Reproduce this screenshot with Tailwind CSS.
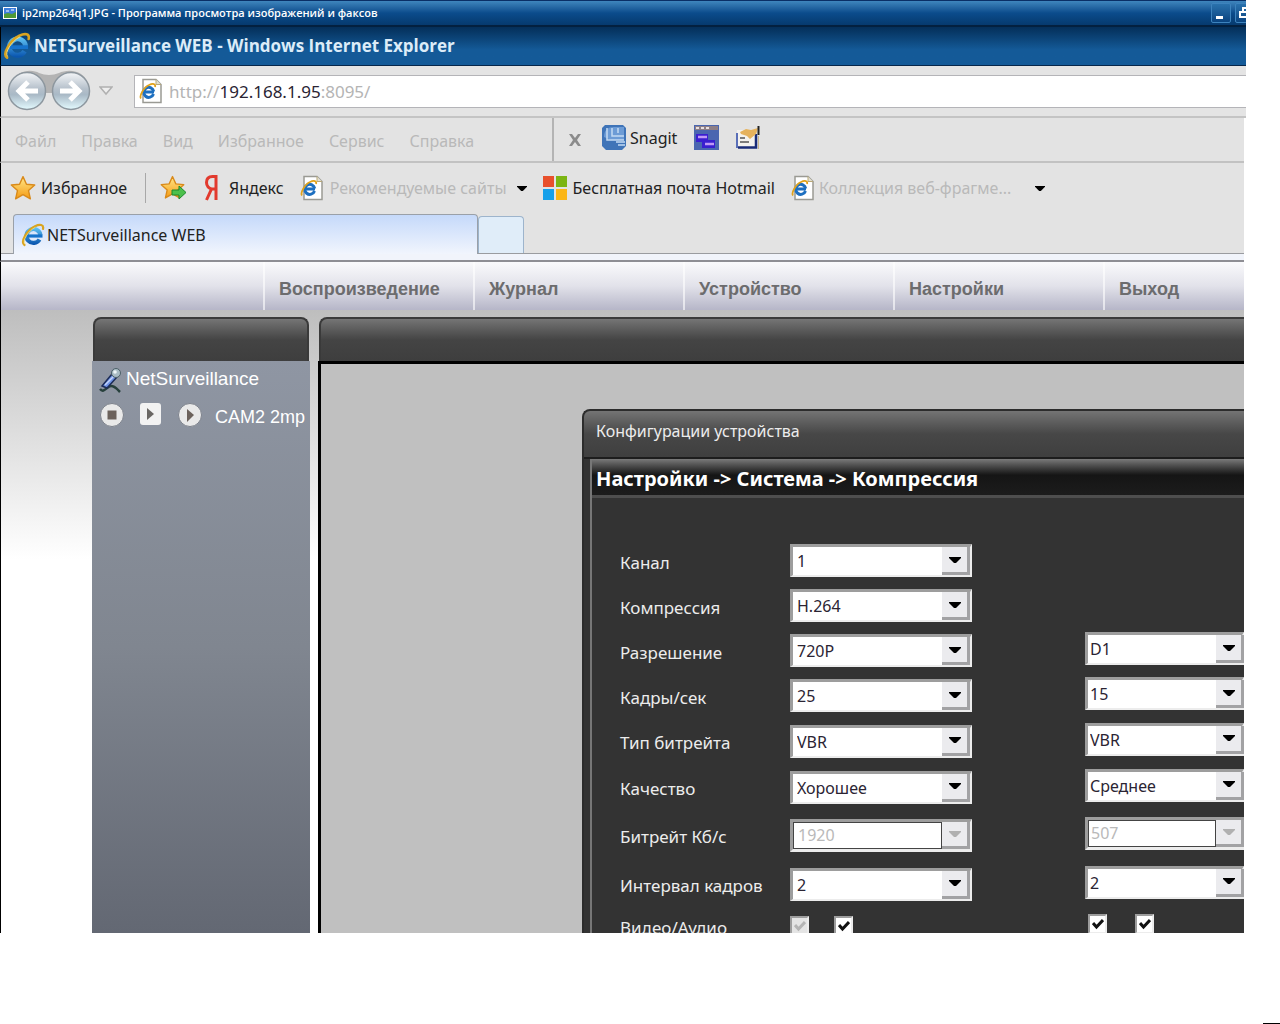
<!DOCTYPE html>
<html lang="ru">
<head>
    <meta charset="UTF-8">
    <meta name="viewport" content="width=device-width, initial-scale=1.0">
    <title>ip2mp264q1.JPG - Программа просмотра изображений и факсов</title>
    <script src="https://cdn.jsdelivr.net/npm/@tailwindcss/browser@4"></script>
</head>
<body class="relative flex h-screen flex-col overflow-hidden bg-white pb-[91px] font-['Noto_Sans',sans-serif] text-base text-[#222]">

    <!-- Shared icons -->
    <svg class="absolute h-0 w-0">
        <defs>
            <linearGradient id="ie-blue" gradientUnits="userSpaceOnUse" x1="0" y1="4" x2="0" y2="21"><stop offset="0" stop-color="#63c8f7"/><stop offset="1" stop-color="#0b57b0"/></linearGradient>
            <linearGradient id="orb" x1="0" y1="0" x2="0" y2="1"><stop offset="0" stop-color="#f4f6f8"/><stop offset=".45" stop-color="#b4bfca"/><stop offset=".6" stop-color="#a9b9c6"/><stop offset="1" stop-color="#e4fbff"/></linearGradient>
            <linearGradient id="gold" x1="0" y1="0" x2="0" y2="1"><stop offset="0" stop-color="#ffe98a"/><stop offset="1" stop-color="#f59a12"/></linearGradient>
        </defs>
        <symbol id="ie" viewBox="0 0 24 24">
            <path d="M18.500 16.500a7 7 0 1 1 .9-4.500" fill="none" stroke="url(#ie-blue)" stroke-width="4.200"/>
            <path d="M6 13h15.500" stroke="#1673cc" stroke-width="3.200"/>
            <path d="M3.500 22C-1 19 6 7 14 3.200C19 .8 23 1.500 22 6" fill="none" stroke="#d9a420" stroke-width="2.200" stroke-linecap="round"/>
            <path d="M4 21C1 18 7 8 14.500 4.200" fill="none" stroke="#f7e07a" stroke-width=".8"/>
        </symbol>
        <symbol id="ie-page" viewBox="0 0 24 26">
            <path d="M4 1.500h13l5 5v18H4z" fill="#fff" stroke="#9a9a94" stroke-width="1.500"/>
            <path d="M17 1.500v5h5" fill="#e4e0d0" stroke="#b8a878"/>
            <path d="M14.500 16a5 5 0 1 1 .2-2.500M5.500 14h9.500" fill="none" stroke="#1d6fc0" stroke-width="3"/>
            <path d="M2 20.500C0 18 5 9 10 7c4-2 7-1 6 2" fill="none" stroke="#e0a21c" stroke-width="1.800"/>
        </symbol>
        <symbol id="star" viewBox="0 0 24 24">
            <path d="M12 1.500l3.200 7 7.600.8-5.700 5.100 1.700 7.600L12 18.100 5.200 22l1.700-7.600L1.200 9.300l7.600-.8z" fill="url(#gold)" stroke="#d98a1a" stroke-width="1.300" stroke-linejoin="round"/>
        </symbol>
        <symbol id="caret" viewBox="0 0 12 6"><path d="M0 0h12v1L7 6H5L0 1z" fill="currentColor"/></symbol>
    </svg>

    <!-- Viewer title bar -->
    <header class="mr-[34px] flex h-[27px] shrink-0 items-center overflow-hidden border-t border-b-2 border-t-[#0a2f66] border-b-[#03203f] bg-linear-to-b from-[#3f86bd] via-[#0b4c8c] to-[#063a6e] pl-[3px] text-white">
        <svg class="h-3.5 w-3.5" viewBox="0 0 14 14"><path d="M0 1h14v12H0z" fill="#fff"/><path d="M1 2h12v6H1z" fill="#3e7fdc"/><path d="M1 8l4-1 4 1 4-2v6H1z" fill="#4f9a35"/><path d="M3 5h3M8 4h3" stroke="#fff"/></svg>
        <h1 class="ml-[5px] flex-1 font-['Open_Sans',sans-serif] text-[11px] font-semibold whitespace-nowrap">ip2mp264q1.JPG - Программа просмотра изображений и факсов</h1>
        <div class="flex gap-1">
            <button aria-label="Свернуть" class="flex h-5 w-5 items-end rounded-xs border border-[#3d83bd] bg-linear-to-b from-[#2a72ad] to-[#0a4480] pb-[3px] pl-1"><span class="h-[3px] w-[7px] bg-white"></span></button>
            <button aria-label="Восстановить" class="-mr-[9px] h-5 w-5 rounded-xs border border-[#3d83bd] bg-linear-to-b from-[#2a72ad] to-[#0a4480] pl-[3px]"><svg class="h-3 w-3" viewBox="0 0 12 12" fill="none" stroke="#fff" stroke-width="2"><path d="M1 5h7v5H1zM4 4V1h7v6H8"/></svg></button>
        </div>
    </header>

    <!-- Browser title bar -->
    <div class="mr-[34px] flex h-[39px] shrink-0 items-center border-b border-l border-b-[#06264a] border-l-black bg-linear-to-b from-[#052f59] to-[#145a98] to-60% pl-0.5">
        <svg class="h-7 w-7"><use href="#ie"/></svg>
        <h2 class="ml-[3px] font-['Open_Sans',sans-serif] text-[17px] font-bold whitespace-nowrap text-[#dcecf8]">NETSurveillance WEB - Windows Internet Explorer</h2>
    </div>

    <!-- Address row -->
    <div class="mr-[34px] flex h-[52px] shrink-0 items-center border-b-2 border-l border-b-[#c4c4c4] border-l-black bg-[#e4e4e4] pl-1.5">
        <div class="relative flex">
            <svg class="h-11 w-[84px]" viewBox="0 0 84 44">
                <path d="M4 14C10 0 26 0 32 4q10 4 20 0C60 0 76 0 81 14v10H4z" fill="#b3b3b3"/>
                <g stroke="#8d979f" stroke-width="1.500" fill="url(#orb)"><circle cx="20" cy="22" r="18.500"/><circle cx="64" cy="22" r="18.500"/></g>
                <g fill="none" stroke="#fff" stroke-width="5"><path d="M31 22H13M21 13l-9 9 9 9M53 22h18M63 13l9 9-9 9"/></g>
            </svg>
            <button aria-label="Назад" class="absolute top-0.5 left-0 h-10 w-10 rounded-full"></button>
            <button aria-label="Вперёд" class="absolute top-0.5 right-0 h-10 w-10 rounded-full"></button>
        </div>
        <button aria-label="Последние страницы" class="ml-2"><svg class="h-2.5 w-3.5" viewBox="0 0 14 10"><path d="M1 1h12L7 8z" fill="#eee" stroke="#b0b0b0" stroke-width="1.500"/></svg></button>
        <div class="ml-[21px] flex h-[33px] flex-1 items-center border border-r-0 border-[#b4b4b8] bg-white pl-1">
            <svg class="h-[26px] w-6"><use href="#ie-page"/></svg>
            <p class="ml-1.5 pt-0.5 text-[17px] text-[#b4b4b4]"><a href="#">http://<span class="text-[#2a2433]">192.168.1.95</span>:8095/</a></p>
        </div>
    </div>

    <!-- Menu row -->
    <div class="mr-9 flex h-[45px] shrink-0 items-stretch border-b-2 border-l border-b-[#c2c2c2] border-l-black bg-[#e3e3e3]">
        <nav class="flex w-[553px] items-center gap-[25px] border-r-2 border-r-[#b4b4b4] pt-0.5 pl-3.5 text-[#b9b9b9]">
            <a href="#">Файл</a>
            <a href="#">Правка</a>
            <a href="#">Вид</a>
            <a href="#">Избранное</a>
            <a href="#">Сервис</a>
            <a href="#">Справка</a>
        </nav>
        <div class="flex items-center pb-1 pl-3.5">
            <button aria-label="Закрыть панель" class="pt-1"><svg class="h-3.5 w-3.5" viewBox="0 0 14 14"><path d="M1 1h3l3 4 3-4h3L9 7l4 6h-3L7 9l-3 4H1l4-6z" fill="#8b8b8b"/></svg></button>
            <button class="ml-5 flex items-center gap-1">
                <svg class="h-[25px] w-6" viewBox="0 0 24 25"><path d="M3 0h18l3 3v18l-4 4H4l-4-4V3z" fill="#3f74b8"/><path d="M2 12C2 5 6 2 12 2h10v13H9z" fill="#6d9cd6"/><path d="M5 3v12h17M10 3v8h12M16 3v5M14 17h9M16 20h7" fill="none" stroke="#c4daf3" stroke-width="1.500"/></svg>
                <span>Snagit</span>
            </button>
            <button aria-label="Окна" class="ml-[17px]"><svg class="h-[25px] w-[25px]" viewBox="0 0 25 25"><path d="M0 0h25v25H0z" fill="#4a66b0"/><path d="M1 1h23v4H1z" fill="#8e7f86"/><path d="M2 2h3v2H2zM7 2h3v2H7zM12 2h3v2h-3z" fill="#e8e0e0"/><path d="M2 9h12v6h7v8H8v-6H2z" fill="#3a1fd0"/><path d="M4 12h9M11 19h9" stroke="#c09af5" stroke-width="2.500"/></svg></button>
            <button aria-label="Редактор" class="ml-[17px]"><svg class="h-[25px] w-6" viewBox="0 0 24 25"><path d="M1 5h19v17H1z" fill="#f4f2ee"/><path d="M1 23V8" stroke="#5a6fb8" stroke-width="2"/><path d="M2 22.500h18V9" fill="none" stroke="#1a2c78" stroke-width="2.500"/><path d="M4 7l6-3 5 1 7-2-2 6-6 5-3-3-6-2z" fill="#e6b25c"/><path d="M22.500 1v9" stroke="#222" stroke-width="2"/><path d="M22.500 11v13" stroke="#c9b68c"/><path d="M4 13h5M4 17h9" stroke="#555" stroke-width="1.500"/></svg></button>
        </div>
    </div>

    <!-- Favourites row -->
    <div class="mr-9 flex h-[50px] shrink-0 items-center border-l border-l-black bg-[#e3e3e3] pl-2 whitespace-nowrap">
        <button class="flex items-center gap-1"><svg class="h-[26px] w-7"><use href="#star"/></svg>Избранное</button>
        <div class="ml-[18px] h-[30px] w-px bg-[#a8a8a8]"></div>
        <button aria-label="Добавить в избранное" class="ml-3.5"><svg class="h-[26px] w-[26px]" viewBox="0 0 26 26"><use href="#star" width="25" height="25"/><path d="M12 15h7v-4l7 6.500-7 6.500v-4h-7z" fill="#4cc04c" stroke="#1d8a2c"/></svg></button>
        <a href="#" class="ml-[18px] flex items-center gap-2.5"><svg class="h-[26px] w-[15px]" viewBox="0 0 15 26"><path d="M12 25V1.500H8.500C4.500 1.500 2.500 4 2.500 7.500S5 14 8 14h4M7.500 14L2.500 25" fill="none" stroke="#e23a2e" stroke-width="3"/></svg>Яндекс</a>
        <button class="ml-4 flex items-center gap-1.5 text-[#b9b9b9]"><svg class="h-[26px] w-6"><use href="#ie-page"/></svg>Рекомендуемые сайты<svg class="ml-1 h-[5px] w-2.5 text-black"><use href="#caret"/></svg></button>
        <a href="#" class="ml-4 flex items-center gap-1.5"><svg class="h-6 w-6" viewBox="0 0 24 24"><path d="M0 0h11v11H0z" fill="#e8502c"/><path d="M13 0h11v11H13z" fill="#7cb513"/><path d="M0 13h11v11H0z" fill="#16a0ea"/><path d="M13 13h11v11H13z" fill="#fbb616"/></svg>Бесплатная почта Hotmail</a>
        <button class="ml-4 flex items-center gap-1 text-[#b9b9b9]"><svg class="h-[26px] w-6"><use href="#ie-page"/></svg>Коллекция веб-фрагме...<svg class="ml-5 h-[5px] w-2.5 text-black"><use href="#caret"/></svg></button>
    </div>

    <!-- Tabs -->
    <div class="mr-9 flex h-[49px] shrink-0 flex-col border-b-2 border-l border-b-[#8e8e94] border-l-black bg-[#f1f4fb]">
        <div class="flex h-[41px] items-end border-b border-b-[#9a9ca0] bg-[#e3e3e3] pl-3">
            <a href="#" class="-mb-px flex h-10 w-[465px] items-center rounded-t border border-b-0 border-[#9aa0a8] bg-linear-to-b from-[#c5d9fa] to-[#f1f5fd] pl-[7px]"><svg class="h-6 w-6"><use href="#ie"/></svg><span class="ml-0.5">NETSurveillance WEB</span></a>
            <button aria-label="Новая вкладка" class="h-[37px] w-[46px] rounded-t border border-b-0 border-[#9db4cc] bg-[#e0edf9]"></button>
        </div>
    </div>

    <!-- Site navigation -->
    <nav class="mr-9 flex h-12 shrink-0 items-stretch border-l border-l-black bg-linear-to-b from-[#fafafc] via-[#e2e2ea] to-[#b6b6c8] pl-[262px] font-['Liberation_Sans',sans-serif] text-lg font-bold text-[#6c6c6e]">
        <a href="#" class="flex w-[210px] items-center border-l-2 border-l-white/60 pt-1.5 pl-3.5">Воспроизведение</a>
        <a href="#" class="flex w-[210px] items-center border-l-2 border-l-white/60 pt-1.5 pl-3.5">Журнал</a>
        <a href="#" class="flex w-[210px] items-center border-l-2 border-l-white/60 pt-1.5 pl-3.5">Устройство</a>
        <a href="#" class="flex w-[210px] items-center border-l-2 border-l-white/60 pt-1.5 pl-3.5">Настройки</a>
        <a href="#" class="flex flex-1 items-center border-l-2 border-l-white/60 pt-1.5 pl-3.5">Выход</a>
    </nav>

    <!-- Page -->
    <div class="mr-9 flex min-h-0 flex-1 overflow-hidden border-l border-l-black bg-linear-to-b from-[#bebebe] to-white to-40% pt-[7px] pl-[91px]">
        <aside class="flex w-[218px] shrink-0 flex-col font-['Liberation_Sans',sans-serif] text-white">
            <div class="mr-px ml-px h-11 shrink-0 rounded-t-lg border-2 border-b-0 border-[#3a3a3a] bg-linear-to-b from-[#757575] via-[#444] to-[#3e3e3e]"></div>
            <div class="flex-1 bg-linear-to-b from-[#8f96a3] via-[#808690] to-[#636873] pt-1.5 pl-[7px] whitespace-nowrap">
                <div class="flex h-6 items-start gap-1">
                    <svg class="h-[26px] w-[23px] shrink-0" viewBox="0 0 23 26"><path d="M1 22c4 5 7-3 11-3s5 2 9 6" fill="none" stroke="#27403c" stroke-width="2.500"/><path d="M3 19L13 7l5 3L8 21z" fill="#6f93e4" stroke="#1c2c58" stroke-width="1.500"/><path d="M6 18l9-9" stroke="#c3d4fa" stroke-width="1.500"/><circle cx="17" cy="6" r="4.500" fill="#a9bcc4" stroke="#4c6068"/><circle cx="16" cy="5" r="1.800" fill="#eef6f8"/></svg>
                    <span class="text-[19px] leading-6">NetSurveillance</span>
                </div>
                <div class="mt-2.5 flex h-7 items-center overflow-hidden">
                    <button aria-label="Стоп"><svg class="h-[26px] w-[26px]" viewBox="0 0 26 26"><circle cx="13" cy="13" r="11.500" fill="#e9e9e9" stroke="#7d828c"/><path d="M8.500 8.500h9v9h-9z" fill="#6c625c"/></svg></button>
                    <button aria-label="Запись" class="ml-[13px]"><svg class="h-[26px] w-[26px]" viewBox="0 0 26 26"><rect x="2" y="1" width="21" height="22" rx="3" fill="#f2f2f2"/><path d="M9 6l7 6-7 6z" fill="#6a6764"/></svg></button>
                    <button aria-label="Пуск" class="ml-[13px]"><svg class="h-[26px] w-[26px]" viewBox="0 0 26 26"><circle cx="13" cy="13" r="11.500" fill="#e9e9e9" stroke="#7d828c"/><path d="M10 7l7 6-7 7z" fill="#6c625c"/></svg></button>
                    <span class="ml-3 pt-1 text-lg">CAM2 2mp</span>
                </div>
            </div>
        </aside>

        <main class="ml-2 flex min-w-0 flex-1 flex-col">
            <div class="ml-px h-11 shrink-0 rounded-tl-lg border-2 border-r-0 border-b-0 border-[#3a3a3a] bg-linear-to-b from-[#757575] via-[#444] to-[#3e3e3e]"></div>
            <div class="flex min-h-0 flex-1 flex-col border-t-3 border-l-3 border-black bg-[#c0c0c0] pt-[45px] pl-[261px]">

                <!-- Device configuration dialog -->
                <section class="flex min-h-0 flex-1 flex-col rounded-tl-lg border-t-2 border-l-2 border-[#2c2c2c] bg-[#333] text-[#ececec]">
                    <h3 class="h-12 shrink-0 rounded-tl-md border-b-2 border-b-[#1d1d1d] bg-linear-to-b from-[#747474] via-[#474747] to-[#3f3f3f] pt-2 pl-3">Конфигурации устройства</h3>
                    <div class="ml-1.5 flex min-h-0 flex-1 flex-col overflow-hidden border-l-2 border-l-[#777]">
                        <h4 class="flex h-[39px] shrink-0 items-center border-b-3 border-b-[#4e4e4e] bg-linear-to-b from-[#7a7a7a] via-[#151515] via-45% to-[#1c1c1c] pt-1 pl-1 text-xl font-bold text-white">Настройки -&gt; Система -&gt; Компрессия</h4>
                        <form class="shrink-0 pt-10 pl-7 text-base">
                            <div class="grid h-[45px] grid-cols-[170px_182px_113px_1fr] items-center">
                                <label for="channel" class="pt-1 text-[17px]">Канал</label>
                                <div class="relative">
                                    <select id="channel" class="h-[33px] w-full appearance-none border-t-3 border-r-2 border-b-2 border-l-3 border-t-[#9d9d9d] border-r-[#ececec] border-b-[#ececec] border-l-[#9d9d9d] bg-white pl-1 text-[#2b2433]"><option>1</option></select>
                                    <span class="pointer-events-none absolute top-[3px] right-0.5 flex h-7 w-7 items-center justify-center border-r-3 border-b-3 border-r-[#a2a2a4] border-b-[#a2a2a4] bg-[#ebebee] text-black"><svg class="h-1.5 w-3"><use href="#caret"/></svg></span>
                                </div>
                            </div>
                            <div class="grid h-[45px] grid-cols-[170px_182px_113px_1fr] items-center">
                                <label for="codec" class="pt-1 text-[17px]">Компрессия</label>
                                <div class="relative">
                                    <select id="codec" class="h-[33px] w-full appearance-none border-t-3 border-r-2 border-b-2 border-l-3 border-t-[#9d9d9d] border-r-[#ececec] border-b-[#ececec] border-l-[#9d9d9d] bg-white pl-1 text-[#2b2433]"><option>H.264</option></select>
                                    <span class="pointer-events-none absolute top-[3px] right-0.5 flex h-7 w-7 items-center justify-center border-r-3 border-b-3 border-r-[#a2a2a4] border-b-[#a2a2a4] bg-[#ebebee] text-black"><svg class="h-1.5 w-3"><use href="#caret"/></svg></span>
                                </div>
                            </div>
                            <div class="grid h-[45px] grid-cols-[170px_182px_113px_1fr] items-center">
                                <label for="resolution" class="pt-1 text-[17px]">Разрешение</label>
                                <div class="relative">
                                    <select id="resolution" class="h-[33px] w-full appearance-none border-t-3 border-r-2 border-b-2 border-l-3 border-t-[#9d9d9d] border-r-[#ececec] border-b-[#ececec] border-l-[#9d9d9d] bg-white pl-1 text-[#2b2433]"><option>720P</option></select>
                                    <span class="pointer-events-none absolute top-[3px] right-0.5 flex h-7 w-7 items-center justify-center border-r-3 border-b-3 border-r-[#a2a2a4] border-b-[#a2a2a4] bg-[#ebebee] text-black"><svg class="h-1.5 w-3"><use href="#caret"/></svg></span>
                                </div>
                                <div class="relative col-start-4 mb-1">
                                    <select aria-label="Разрешение, доп. поток" class="h-[33px] w-full appearance-none border-t-3 border-r-2 border-b-2 border-l-3 border-t-[#9d9d9d] border-r-[#ececec] border-b-[#ececec] border-l-[#9d9d9d] bg-white pl-0.5 text-[#2b2433]"><option>D1</option></select>
                                    <span class="pointer-events-none absolute top-[3px] right-0 flex h-7 w-7 items-center justify-center border-r-3 border-b-3 border-r-[#a2a2a4] border-b-[#a2a2a4] bg-[#ebebee] text-black"><svg class="h-1.5 w-3"><use href="#caret"/></svg></span>
                                </div>
                            </div>
                            <div class="grid h-[45px] grid-cols-[170px_182px_113px_1fr] items-center">
                                <label for="fps" class="pt-1 text-[17px]">Кадры/сек</label>
                                <div class="relative">
                                    <select id="fps" class="h-[33px] w-full appearance-none border-t-3 border-r-2 border-b-2 border-l-3 border-t-[#9d9d9d] border-r-[#ececec] border-b-[#ececec] border-l-[#9d9d9d] bg-white pl-1 text-[#2b2433]"><option>25</option></select>
                                    <span class="pointer-events-none absolute top-[3px] right-0.5 flex h-7 w-7 items-center justify-center border-r-3 border-b-3 border-r-[#a2a2a4] border-b-[#a2a2a4] bg-[#ebebee] text-black"><svg class="h-1.5 w-3"><use href="#caret"/></svg></span>
                                </div>
                                <div class="relative col-start-4 mb-1">
                                    <select aria-label="Кадры/сек, доп. поток" class="h-[33px] w-full appearance-none border-t-3 border-r-2 border-b-2 border-l-3 border-t-[#9d9d9d] border-r-[#ececec] border-b-[#ececec] border-l-[#9d9d9d] bg-white pl-0.5 text-[#2b2433]"><option>15</option></select>
                                    <span class="pointer-events-none absolute top-[3px] right-0 flex h-7 w-7 items-center justify-center border-r-3 border-b-3 border-r-[#a2a2a4] border-b-[#a2a2a4] bg-[#ebebee] text-black"><svg class="h-1.5 w-3"><use href="#caret"/></svg></span>
                                </div>
                            </div>
                            <div class="grid h-[46px] grid-cols-[170px_182px_113px_1fr] items-center">
                                <label for="rate-type" class="pt-1 text-[17px]">Тип битрейта</label>
                                <div class="relative">
                                    <select id="rate-type" class="h-[33px] w-full appearance-none border-t-3 border-r-2 border-b-2 border-l-3 border-t-[#9d9d9d] border-r-[#ececec] border-b-[#ececec] border-l-[#9d9d9d] bg-white pl-1 text-[#2b2433]"><option>VBR</option></select>
                                    <span class="pointer-events-none absolute top-[3px] right-0.5 flex h-7 w-7 items-center justify-center border-r-3 border-b-3 border-r-[#a2a2a4] border-b-[#a2a2a4] bg-[#ebebee] text-black"><svg class="h-1.5 w-3"><use href="#caret"/></svg></span>
                                </div>
                                <div class="relative col-start-4 mb-1">
                                    <select aria-label="Тип битрейта, доп. поток" class="h-[33px] w-full appearance-none border-t-3 border-r-2 border-b-2 border-l-3 border-t-[#9d9d9d] border-r-[#ececec] border-b-[#ececec] border-l-[#9d9d9d] bg-white pl-0.5 text-[#2b2433]"><option>VBR</option></select>
                                    <span class="pointer-events-none absolute top-[3px] right-0 flex h-7 w-7 items-center justify-center border-r-3 border-b-3 border-r-[#a2a2a4] border-b-[#a2a2a4] bg-[#ebebee] text-black"><svg class="h-1.5 w-3"><use href="#caret"/></svg></span>
                                </div>
                            </div>
                            <div class="grid h-[46px] grid-cols-[170px_182px_113px_1fr] items-center">
                                <label for="quality" class="pt-1 text-[17px]">Качество</label>
                                <div class="relative">
                                    <select id="quality" class="h-[33px] w-full appearance-none border-t-3 border-r-2 border-b-2 border-l-3 border-t-[#9d9d9d] border-r-[#ececec] border-b-[#ececec] border-l-[#9d9d9d] bg-white pl-1 text-[#2b2433]"><option>Хорошее</option></select>
                                    <span class="pointer-events-none absolute top-[3px] right-0.5 flex h-7 w-7 items-center justify-center border-r-3 border-b-3 border-r-[#a2a2a4] border-b-[#a2a2a4] bg-[#ebebee] text-black"><svg class="h-1.5 w-3"><use href="#caret"/></svg></span>
                                </div>
                                <div class="relative col-start-4 mb-1">
                                    <select aria-label="Качество, доп. поток" class="h-[33px] w-full appearance-none border-t-3 border-r-2 border-b-2 border-l-3 border-t-[#9d9d9d] border-r-[#ececec] border-b-[#ececec] border-l-[#9d9d9d] bg-white pl-0.5 text-[#2b2433]"><option>Среднее</option></select>
                                    <span class="pointer-events-none absolute top-[3px] right-0 flex h-7 w-7 items-center justify-center border-r-3 border-b-3 border-r-[#a2a2a4] border-b-[#a2a2a4] bg-[#ebebee] text-black"><svg class="h-1.5 w-3"><use href="#caret"/></svg></span>
                                </div>
                            </div>
                            <div class="grid h-[50px] grid-cols-[170px_182px_113px_1fr] items-center">
                                <label for="bitrate" class="pt-1 text-[17px]">Битрейт Кб/с</label>
                                <div class="flex h-[33px] border-t-3 border-r-2 border-b-3 border-l-3 border-t-[#9d9d9d] border-r-[#ececec] border-b-[#ececec] border-l-[#9d9d9d] bg-white">
                                    <select id="bitrate" disabled class="min-w-0 flex-1 appearance-none border border-[#444] bg-white pl-1 text-[#b9b9b9] opacity-100"><option>1920</option></select>
                                    <span class="flex w-7 items-center justify-center border-r-3 border-b-3 border-r-[#a2a2a4] border-b-[#a2a2a4] bg-[#ebebee] text-[#b0b0b0]"><svg class="h-1.5 w-3"><use href="#caret"/></svg></span>
                                </div>
                                <div class="col-start-4 mb-1 flex h-[33px] border-t-3 border-b-3 border-l-3 border-t-[#9d9d9d] border-b-[#ececec] border-l-[#9d9d9d] bg-white">
                                    <select aria-label="Битрейт, доп. поток" disabled class="min-w-0 flex-1 appearance-none border border-[#444] bg-white pl-0.5 text-[#b9b9b9] opacity-100"><option>507</option></select>
                                    <span class="flex w-7 items-center justify-center border-r-3 border-b-3 border-r-[#a2a2a4] border-b-[#a2a2a4] bg-[#ebebee] text-[#b0b0b0]"><svg class="h-1.5 w-3"><use href="#caret"/></svg></span>
                                </div>
                            </div>
                            <div class="grid h-12 grid-cols-[170px_182px_113px_1fr] items-center">
                                <label for="interval" class="pt-1 text-[17px] whitespace-nowrap">Интервал кадров</label>
                                <div class="relative">
                                    <select id="interval" class="h-[33px] w-full appearance-none border-t-3 border-r-2 border-b-2 border-l-3 border-t-[#9d9d9d] border-r-[#ececec] border-b-[#ececec] border-l-[#9d9d9d] bg-white pl-1 text-[#2b2433]"><option>2</option></select>
                                    <span class="pointer-events-none absolute top-[3px] right-0.5 flex h-7 w-7 items-center justify-center border-r-3 border-b-3 border-r-[#a2a2a4] border-b-[#a2a2a4] bg-[#ebebee] text-black"><svg class="h-1.5 w-3"><use href="#caret"/></svg></span>
                                </div>
                                <div class="relative col-start-4 mb-1">
                                    <select aria-label="Интервал кадров, доп. поток" class="h-[33px] w-full appearance-none border-t-3 border-r-2 border-b-2 border-l-3 border-t-[#9d9d9d] border-r-[#ececec] border-b-[#ececec] border-l-[#9d9d9d] bg-white pl-0.5 text-[#2b2433]"><option>2</option></select>
                                    <span class="pointer-events-none absolute top-[3px] right-0 flex h-7 w-7 items-center justify-center border-r-3 border-b-3 border-r-[#a2a2a4] border-b-[#a2a2a4] bg-[#ebebee] text-black"><svg class="h-1.5 w-3"><use href="#caret"/></svg></span>
                                </div>
                            </div>
                            <div class="grid h-9 grid-cols-[170px_182px_113px_1fr] items-center">
                                <span class="pt-1 text-[17px]">Видео/Аудио</span>
                                <div class="flex gap-[25px]">
                                    <div class="relative h-5 w-[19px]"><input type="checkbox" checked disabled aria-label="Видео" class="h-5 w-[19px] appearance-none border-2 border-t-[#9d9d9d] border-r-[#ececec] border-b-[#ececec] border-l-[#9d9d9d] bg-[#e4e4e4]"><svg class="pointer-events-none absolute top-1 left-1 h-3 w-3" viewBox="0 0 12 12"><path d="M1 5l3.500 4L11 2" fill="none" stroke="#b4b4b4" stroke-width="3"/></svg></div>
                                    <div class="relative h-5 w-[19px]"><input type="checkbox" checked aria-label="Аудио" class="h-5 w-[19px] appearance-none border-2 border-t-[#9d9d9d] border-r-[#ececec] border-b-[#ececec] border-l-[#9d9d9d] bg-white"><svg class="pointer-events-none absolute top-1 left-1 h-3 w-3" viewBox="0 0 12 12"><path d="M1 5l3.500 4L11 2" fill="none" stroke="#111" stroke-width="3"/></svg></div>
                                </div>
                                <div class="col-start-4 mb-1 flex gap-7 pl-[3px]">
                                    <div class="relative h-5 w-[19px]"><input type="checkbox" checked aria-label="Видео, доп. поток" class="h-5 w-[19px] appearance-none border-2 border-t-[#9d9d9d] border-r-[#ececec] border-b-[#ececec] border-l-[#9d9d9d] bg-white"><svg class="pointer-events-none absolute top-1 left-1 h-3 w-3" viewBox="0 0 12 12"><path d="M1 5l3.500 4L11 2" fill="none" stroke="#111" stroke-width="3"/></svg></div>
                                    <div class="relative h-5 w-[19px]"><input type="checkbox" checked aria-label="Аудио, доп. поток" class="h-5 w-[19px] appearance-none border-2 border-t-[#9d9d9d] border-r-[#ececec] border-b-[#ececec] border-l-[#9d9d9d] bg-white"><svg class="pointer-events-none absolute top-1 left-1 h-3 w-3" viewBox="0 0 12 12"><path d="M1 5l3.500 4L11 2" fill="none" stroke="#111" stroke-width="3"/></svg></div>
                                </div>
                            </div>
                        </form>
                    </div>
                </section>
            </div>
        </main>
    </div>

    <div class="absolute right-0 bottom-0 h-px w-[17px] bg-black"></div>
</body>
</html>
